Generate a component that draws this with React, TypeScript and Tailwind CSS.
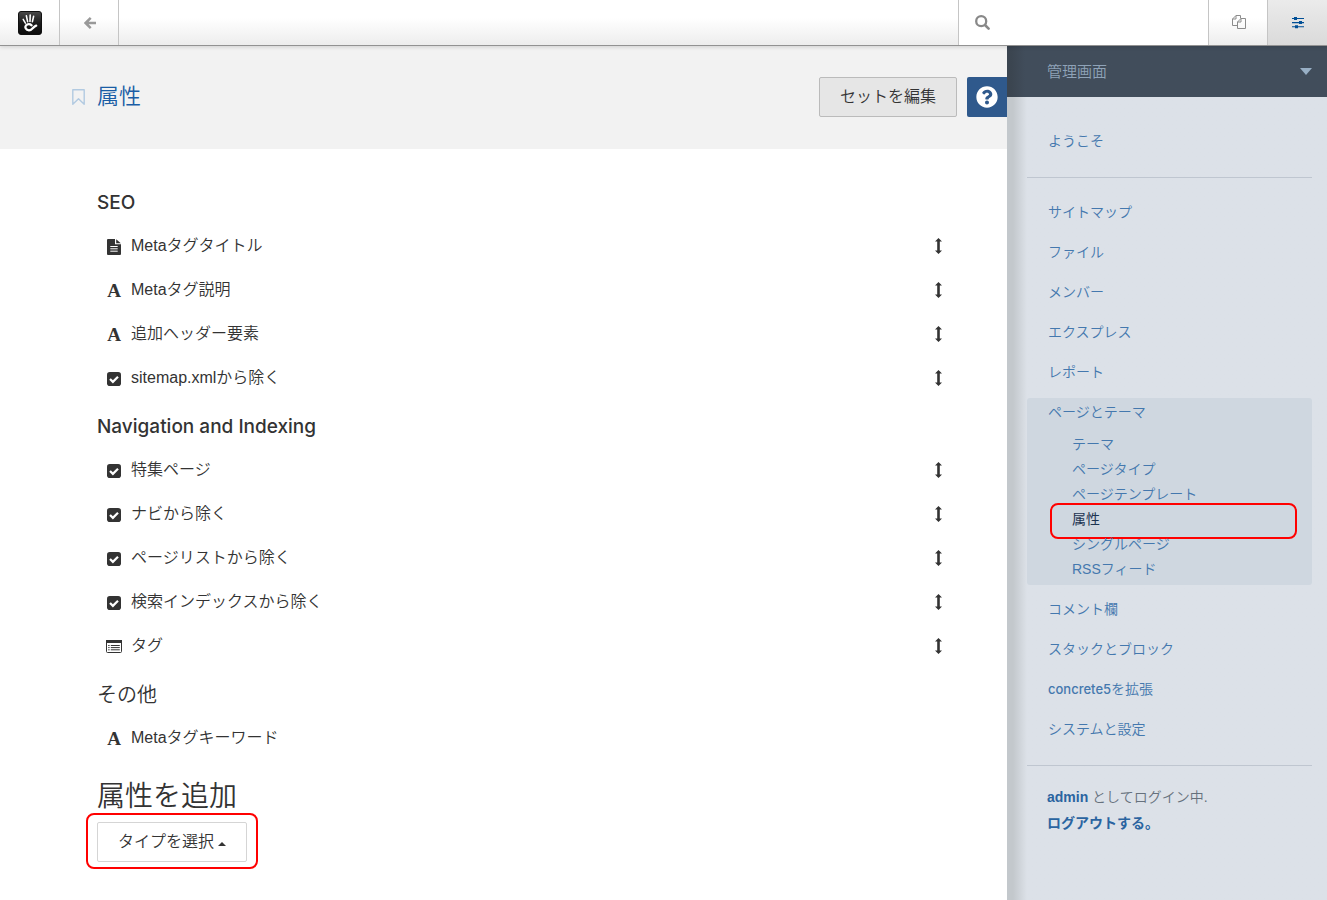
import React from 'react';
import { FaQuestionCircle } from 'react-icons/fa';

type IconKind = 'file' | 'font' | 'check' | 'list';

type Section = {
    title: string;
    latin?: boolean;
    items: { icon: IconKind; label: string }[];
    sortable: boolean;
};

const sections: Section[] = [
    {
        title: 'SEO',
        latin: true,
        sortable: true,
        items: [
            { icon: 'file', label: 'Metaタグタイトル' },
            { icon: 'font', label: 'Metaタグ説明' },
            { icon: 'font', label: '追加ヘッダー要素' },
            { icon: 'check', label: 'sitemap.xmlから除く' },
        ],
    },
    {
        title: 'Navigation and Indexing',
        latin: true,
        sortable: true,
        items: [
            { icon: 'check', label: '特集ページ' },
            { icon: 'check', label: 'ナビから除く' },
            { icon: 'check', label: 'ページリストから除く' },
            { icon: 'check', label: '検索インデックスから除く' },
            { icon: 'list', label: 'タグ' },
        ],
    },
    {
        title: 'その他',
        sortable: false,
        items: [{ icon: 'font', label: 'Metaタグキーワード' }],
    },
];

const menuTop = ['サイトマップ', 'ファイル', 'メンバー', 'エクスプレス', 'レポート'];
const subMenu = ['テーマ', 'ページタイプ', 'ページテンプレート', '属性', 'シングルページ', 'RSSフィード'];

const Logo = () => (
    <svg width="24" height="24" viewBox="0 0 24 24" aria-hidden="true">
        <defs>
            <linearGradient id="logo-bg" x1="0" y1="0" x2="0" y2="1">
                <stop offset="0" stopColor="#4a4a4a" />
                <stop offset="0.5" stopColor="#1c1c1c" />
                <stop offset="1" stopColor="#0c0c0c" />
            </linearGradient>
        </defs>
        <rect x="0.5" y="0.5" width="23" height="23" rx="2.5" fill="url(#logo-bg)" stroke="#111" />
        <g fill="none" stroke="#fff" strokeLinecap="round">
            <path d="M5.2 8.4l2.2 3.8" strokeWidth="1.5" />
            <path d="M8.4 4.9l1.2 5.8" strokeWidth="1.6" />
            <path d="M12.2 4.1l-.2 6.4" strokeWidth="1.6" />
            <path d="M15.6 5.3l-1.2 5.4" strokeWidth="1.6" />
            <path d="M13.6 14.3c-1.6-1.5-4.3-1.4-5.6.1-1.5 1.9-.1 4.9 3 4.9 3.6 0 3.9-3.7 7.2-4.7" strokeWidth="2.3" />
        </g>
    </svg>
);

const BackIcon = () => (
    <svg width="12" height="12" viewBox="0 0 12 12" fill="none" stroke="#999" strokeWidth="2.5" aria-hidden="true">
        <path d="M6.7.9L1.6 6l5.1 5.1M1.8 6H12" />
    </svg>
);

const SearchIcon = () => (
    <svg width="15" height="15" viewBox="0 0 15 15" fill="none" stroke="#888" aria-hidden="true">
        <circle cx="6.2" cy="6.2" r="5" strokeWidth="2.3" />
        <path d="M10 10l3.6 3.6" strokeWidth="2.6" strokeLinecap="round" />
    </svg>
);

const PagesIcon = () => (
    <svg width="14" height="14" viewBox="0 0 14 14" fill="none" stroke="#8c8c8c" strokeLinejoin="round" aria-hidden="true">
        <path d="M5.5 10.5h-5V4L4 .5h4.5v3M4 .5V4H.5" />
        <path d="M5.5 7L9 3.5h4.5v10h-8zM9 3.5V7H5.5" />
    </svg>
);

const SlidersIcon = () => (
    <svg width="12" height="12" viewBox="0 0 12 12" fill="#004f96" aria-hidden="true">
        <path d="M0 1h12v1H0zM0 5h12v1.2H0zM0 9.2h12v1H0z" />
        <path d="M2 0h3v3H2zM7 4.1h3v3H7zM3 8.2h3v3H3z" />
    </svg>
);

const BookmarkIcon = () => (
    <svg width="13" height="16" viewBox="0 0 13 16" fill="none" stroke="#b2cae1" strokeWidth="1.4" strokeLinejoin="round" aria-hidden="true">
        <path d="M.8.7h11.4v14.5L6.5 9.8.8 15.2z" />
    </svg>
);

const MoveIcon = () => (
    <svg width="8" height="16" viewBox="0 0 8 16" fill="#333" aria-hidden="true">
        <path d="M3.5 0L7 3.6H4.8v8.8H7L3.5 16 0 12.4h2.2V3.6H0z" />
    </svg>
);

const AttributeIcon = ({ kind }: { kind: IconKind }) => {
    if (kind === 'font') {
        return <span className="font-['Liberation_Serif',serif] text-[19px] leading-4 font-bold" aria-hidden="true">A</span>;
    }
    if (kind === 'file') {
        return (
            <svg width="14" height="16" viewBox="0 0 14 16" fill="#333" aria-hidden="true">
                <path d="M1 0h7v5.2h6V15a1 1 0 0 1-1 1H1a1 1 0 0 1-1-1V1a1 1 0 0 1 1-1z" />
                <path d="M9.2.2l4.6 4H9.2z" />
                <path d="M3.3 7.5h7.4M3.3 9.8h7.4M3.3 12.2h7.4" stroke="#fff" />
            </svg>
        );
    }
    if (kind === 'check') {
        return (
            <svg width="14" height="14" viewBox="0 0 14 14" aria-hidden="true">
                <rect width="14" height="14" rx="2.8" fill="#333" />
                <path d="M3 7l2.9 2.9L11 4.8" fill="none" stroke="#fff" strokeWidth="2.2" />
            </svg>
        );
    }
    return (
        <svg width="16" height="14" viewBox="0 0 16 14" fill="none" stroke="#333" aria-hidden="true">
            <rect x="0.5" y="0.5" width="15" height="12" rx="1" />
            <path d="M0 1.5h16" strokeWidth="3" />
            <path d="M2.2 5.5h1.4M4.8 5.5h9M2.2 7.6h1.4M4.8 7.6h9M2.2 9.8h1.4M4.8 9.8h9" />
        </svg>
    );
};

const Toolbar = () => (
    <header className="relative z-20 flex h-[46px] border-b border-[#929292] bg-linear-to-b from-white from-40% to-[#ededed] shadow-[0_1px_4px_rgba(0,0,0,0.15)]">
        <a href="#" aria-label="concrete5" className="flex w-[60px] items-center justify-center border-r border-[#c5c5c5]">
            <Logo />
        </a>
        <a href="#" aria-label="戻る" className="flex w-[59px] items-center justify-center border-r border-[#c5c5c5] pl-[2px]">
            <BackIcon />
        </a>
        <label className="ml-auto flex w-[251px] items-center gap-3 border-x border-[#c5c5c5] bg-white pl-4">
            <SearchIcon />
            <input type="search" aria-label="検索" className="min-w-0 flex-1 text-sm outline-none" />
        </label>
        <a href="#" aria-label="ページ" className="flex w-[59px] items-center justify-center border-r border-[#c5c5c5] pb-[2px] pl-[2px]">
            <PagesIcon />
        </a>
        <a href="#" aria-label="管理画面" className="flex w-[59px] items-center justify-center bg-linear-to-b from-[#ebebeb] to-[#dadada]">
            <SlidersIcon />
        </a>
    </header>
);

const AttributeSection = ({ title, latin, items, sortable }: Section) => (
    <section>
        <h2 className={`pb-[9px] leading-[22px] ${latin ? "pt-[17px] font-['Inter','Liberation_Sans',sans-serif] text-[19px] font-medium" : 'pt-[17px] text-xl'}`}>{title}</h2>
        <ul>
            {items.map((item) => (
                <li key={item.label} className="flex h-11 items-center pr-1 pl-[9px]">
                    <span className="flex w-4 justify-center pt-1">
                        <AttributeIcon kind={item.icon} />
                    </span>
                    <a href="#" className="ml-[9px] flex-1 pt-[2px] leading-6">{item.label}</a>
                    {sortable && (
                        <button type="button" aria-label="並べ替え" className="pt-[2px]">
                            <MoveIcon />
                        </button>
                    )}
                </li>
            ))}
        </ul>
    </section>
);

const MenuLink = ({ children }: { children: React.ReactNode }) => (
    <a href="#" className="block pl-[21px] leading-10">{children}</a>
);

const Sidebar = () => (
    <aside className="w-80 shrink-0 bg-[#dce1e8] bg-linear-to-r from-[#c3c8cc] from-[6px] to-[#dce1e8] to-[20px] text-sm font-[350] text-[#4478ae]">
        <button type="button" className="flex h-[51px] w-full items-center justify-between bg-linear-to-r from-[#3b4550] from-[4px] to-[#414d5b] to-[18px] pr-[15px] pl-10 text-[15px] text-[#8fa3b8]">
            管理画面
            <svg width="12" height="7" viewBox="0 0 12 7" fill="#98afc5" aria-hidden="true"><path d="M0 0h12L6 7z" /></svg>
        </button>
        <nav className="pt-6 pr-[15px] pl-5">
            <MenuLink>ようこそ</MenuLink>
            <hr className="mt-4 mb-[14px] border-[#bfc6d0]" />
            {menuTop.map((label) => <MenuLink key={label}>{label}</MenuLink>)}
            <div className="mt-[6px] mb-1 rounded-[3px] bg-[#cfd7e0] pb-[3px]">
                <a href="#" className="block pl-[21px] leading-7">ページとテーマ</a>
                <ul className="pt-[6px]">
                    {subMenu.map((label) => (
                        <li key={label} className="relative pl-[45px] leading-[25px]">
                            <a href="#" className={label === '属性' ? 'font-normal text-[#1c3350]' : ''}>{label}</a>
                            {label === '属性' && (
                                <span className="pointer-events-none absolute -top-1 right-[15px] left-[23px] h-9 rounded-lg border-2 border-[#f00]" />
                            )}
                        </li>
                    ))}
                </ul>
            </div>
            <MenuLink>コメント欄</MenuLink>
            <MenuLink>スタックとブロック</MenuLink>
            <MenuLink><span className="font-['Inter','Liberation_Sans',sans-serif] text-[13px] font-medium">concrete5</span>を拡張</MenuLink>
            <MenuLink>システムと設定</MenuLink>
            <hr className="mt-4 mb-[18px] border-[#bfc6d0]" />
            <p className="pl-5 leading-[26px] text-[#66717d]">
                <a href="#" className="font-bold text-[#2a64a0]">admin</a> としてログイン中.
                <br />
                <a href="#" className="font-bold text-[#2a64a0]">ログアウトする。</a>
            </p>
        </nav>
    </aside>
);

export default function App() {
    return (
        <div className="flex min-h-screen flex-col bg-white font-['Liberation_Sans','Noto_Sans_CJK_JP',sans-serif] text-base text-[#333]">
            <Toolbar />
            <div className="flex flex-1">
                <main className="min-w-0 flex-1 font-[350]">
                    <div className="flex h-[103px] items-center bg-[#f2f2f2] pb-[2px] pl-[72px]">
                        <button type="button" aria-label="お気に入り"><BookmarkIcon /></button>
                        <h1 className="ml-3 text-[22px] leading-8 text-[#1a5da5]">属性</h1>
                        <button type="button" className="ml-auto h-10 rounded-xs border border-[#bbb] bg-[#e6e6e6] px-5">セットを編集</button>
                        <button type="button" aria-label="ヘルプ" className="ml-[10px] flex size-10 items-center justify-center rounded-l-xs bg-[#2f598c] text-white">
                            <FaQuestionCircle size={22} />
                        </button>
                    </div>
                    <div className="pt-[26px] pr-[60px] pb-8 pl-[97px]">
                        {sections.map((section) => <AttributeSection key={section.title} {...section} />)}
                        <h2 className="mt-[22px] text-[28px] leading-8">属性を追加</h2>
                        <div className="relative mt-[9px] w-fit">
                            <button type="button" className="flex h-10 items-center gap-1 rounded-xs border border-[#d5d5d5] px-5">
                                タイプを選択
                                <svg width="8" height="4" viewBox="0 0 8 4" fill="#333" className="mt-1" aria-hidden="true"><path d="M4 0l4 4H0z" /></svg>
                            </button>
                            <span className="pointer-events-none absolute -inset-x-[11px] -top-[9px] -bottom-[7px] rounded-lg border-2 border-[#f00]" />
                        </div>
                    </div>
                </main>
                <Sidebar />
            </div>
        </div>
    );
}
